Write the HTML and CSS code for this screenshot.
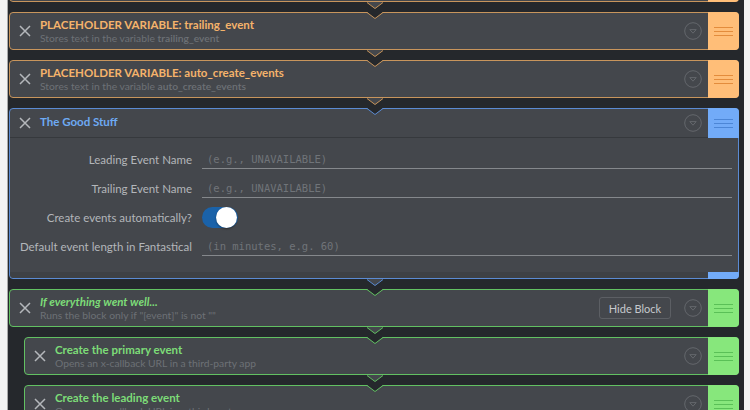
FILE: index.html
```html
<!DOCTYPE html>
<html>
<head>
<meta charset="utf-8">
<title>Blocks</title>
<link rel="stylesheet" href="styles.css">
</head>
<body>
<div class="editor">

  <div class="block orange first">
    <div class="head">
      <span class="close"><svg viewBox="0 0 12 12" width="12" height="12"><path d="M1 1L11 11M11 1L1 11"/></svg></span>
      <div class="text"></div>
      <span class="dd"><svg viewBox="0 0 18 18" width="18" height="18"><circle cx="9" cy="9" r="8.3"/><path d="M5.8 7.6H12.2L9 11.2Z"/></svg></span>
      <span class="handle"><i></i><i></i><i></i></span>
    </div>
    <svg class="tab" viewBox="0 0 16 8" width="16" height="8"><polygon points="0,0 16,0 8,6.5" class="tfill"/><polyline points="0,0.5 8,6.5 16,0.5" class="nline"/></svg>
  </div>

  <div class="block orange">
    <svg class="notch" viewBox="0 0 16 8" width="16" height="8"><polygon points="0,0 16,0 8,6.5" class="nfill"/><polyline points="0,0.5 8,6.5 16,0.5" class="nline"/></svg>
    <div class="head">
      <span class="close"><svg viewBox="0 0 12 12" width="12" height="12"><path d="M1 1L11 11M11 1L1 11"/></svg></span>
      <div class="text"><div class="title">PLACEHOLDER VARIABLE: trailing_event</div><div class="sub">Stores text in the variable <b>trailing_event</b></div></div>
      <span class="dd"><svg viewBox="0 0 18 18" width="18" height="18"><circle cx="9" cy="9" r="8.3"/><path d="M5.8 7.6H12.2L9 11.2Z"/></svg></span>
      <span class="handle"><i></i><i></i><i></i></span>
    </div>
    <svg class="tab" viewBox="0 0 16 8" width="16" height="8"><polygon points="0,0 16,0 8,6.5" class="tfill"/><polyline points="0,0.5 8,6.5 16,0.5" class="nline"/></svg>
  </div>

  <div class="block orange">
    <svg class="notch" viewBox="0 0 16 8" width="16" height="8"><polygon points="0,0 16,0 8,6.5" class="nfill"/><polyline points="0,0.5 8,6.5 16,0.5" class="nline"/></svg>
    <div class="head">
      <span class="close"><svg viewBox="0 0 12 12" width="12" height="12"><path d="M1 1L11 11M11 1L1 11"/></svg></span>
      <div class="text"><div class="title">PLACEHOLDER VARIABLE: auto_create_events</div><div class="sub">Stores text in the variable <b>auto_create_events</b></div></div>
      <span class="dd"><svg viewBox="0 0 18 18" width="18" height="18"><circle cx="9" cy="9" r="8.3"/><path d="M5.8 7.6H12.2L9 11.2Z"/></svg></span>
      <span class="handle"><i></i><i></i><i></i></span>
    </div>
    <svg class="tab" viewBox="0 0 16 8" width="16" height="8"><polygon points="0,0 16,0 8,6.5" class="tfill"/><polyline points="0,0.5 8,6.5 16,0.5" class="nline"/></svg>
  </div>

  <div class="block blue form">
    <svg class="notch" viewBox="0 0 16 8" width="16" height="8"><polygon points="0,0 16,0 8,6.5" class="nfill"/><polyline points="0,0.5 8,6.5 16,0.5" class="nline"/></svg>
    <div class="head short">
      <span class="close"><svg viewBox="0 0 12 12" width="12" height="12"><path d="M1 1L11 11M11 1L1 11"/></svg></span>
      <div class="text"><div class="title">The Good Stuff</div></div>
      <span class="dd"><svg viewBox="0 0 18 18" width="18" height="18"><circle cx="9" cy="9" r="8.3"/><path d="M5.8 7.6H12.2L9 11.2Z"/></svg></span>
      <span class="handle"><i></i><i></i><i></i></span>
    </div>
    <div class="body">
      <div class="row"><label class="lbl">Leading Event Name</label><div class="field">(e.g., UNAVAILABLE)</div></div>
      <div class="row"><label class="lbl">Trailing Event Name</label><div class="field">(e.g., UNAVAILABLE)</div></div>
      <div class="row"><label class="lbl">Create events automatically?</label><span class="switch"><span class="knob"></span></span></div>
      <div class="row"><label class="lbl">Default event length in Fantastical</label><div class="field">(in minutes, e.g. 60)</div></div>
    </div>
    <div class="foot"><span class="foot-handle"></span></div>
    <svg class="tab" viewBox="0 0 16 8" width="16" height="8"><polygon points="0,0 16,0 8,6.5" class="tfill"/><polyline points="0,0.5 8,6.5 16,0.5" class="nline"/></svg>
  </div>

  <div class="block green">
    <svg class="notch" viewBox="0 0 16 8" width="16" height="8"><polygon points="0,0 16,0 8,6.5" class="nfill"/><polyline points="0,0.5 8,6.5 16,0.5" class="nline"/></svg>
    <div class="head">
      <span class="close"><svg viewBox="0 0 12 12" width="12" height="12"><path d="M1 1L11 11M11 1L1 11"/></svg></span>
      <div class="text"><div class="title italic">If everything went well...</div><div class="sub">Runs the block only if "[event]" is not ""</div></div>
      <button class="hide">Hide Block</button>
      <span class="dd"><svg viewBox="0 0 18 18" width="18" height="18"><circle cx="9" cy="9" r="8.3"/><path d="M5.8 7.6H12.2L9 11.2Z"/></svg></span>
      <span class="handle"><i></i><i></i><i></i></span>
    </div>
    <svg class="tab" viewBox="0 0 16 8" width="16" height="8"><polygon points="0,0 16,0 8,6.5" class="tfill"/><polyline points="0,0.5 8,6.5 16,0.5" class="nline"/></svg>
  </div>

  <div class="block green nested">
    <svg class="notch" viewBox="0 0 16 8" width="16" height="8"><polygon points="0,0 16,0 8,6.5" class="nfill"/><polyline points="0,0.5 8,6.5 16,0.5" class="nline"/></svg>
    <div class="head">
      <span class="close"><svg viewBox="0 0 12 12" width="12" height="12"><path d="M1 1L11 11M11 1L1 11"/></svg></span>
      <div class="text"><div class="title">Create the primary event</div><div class="sub">Opens an x-callback URL in a third-party app</div></div>
      <span class="dd"><svg viewBox="0 0 18 18" width="18" height="18"><circle cx="9" cy="9" r="8.3"/><path d="M5.8 7.6H12.2L9 11.2Z"/></svg></span>
      <span class="handle"><i></i><i></i><i></i></span>
    </div>
    <svg class="tab" viewBox="0 0 16 8" width="16" height="8"><polygon points="0,0 16,0 8,6.5" class="tfill"/><polyline points="0,0.5 8,6.5 16,0.5" class="nline"/></svg>
  </div>

  <div class="block green nested">
    <svg class="notch" viewBox="0 0 16 8" width="16" height="8"><polygon points="0,0 16,0 8,6.5" class="nfill"/><polyline points="0,0.5 8,6.5 16,0.5" class="nline"/></svg>
    <div class="head">
      <span class="close"><svg viewBox="0 0 12 12" width="12" height="12"><path d="M1 1L11 11M11 1L1 11"/></svg></span>
      <div class="text"><div class="title">Create the leading event</div><div class="sub">Opens an x-callback URL in a third-party app</div></div>
      <span class="dd"><svg viewBox="0 0 18 18" width="18" height="18"><circle cx="9" cy="9" r="8.3"/><path d="M5.8 7.6H12.2L9 11.2Z"/></svg></span>
      <span class="handle"><i></i><i></i><i></i></span>
    </div>
    <svg class="tab" viewBox="0 0 16 8" width="16" height="8"><polygon points="0,0 16,0 8,6.5" class="tfill"/><polyline points="0,0.5 8,6.5 16,0.5" class="nline"/></svg>
  </div>

</div>
</body>
</html>
```

FILE: styles.css
```css
html, body {
  margin: 0;
  padding: 0;
  height: 410px;
  overflow: hidden;
  background: #f3f3f3;
  font-family: Lato, "Noto Sans", sans-serif;
}

.editor {
  margin-left: 7px;
  width: 737px;
  height: 450px;
  margin-top: -36px;
  box-sizing: border-box;
  border-left: 1px solid #a9a9a9;
  background: #25282c;
  padding: 0 5px 0 1px;
  display: flex;
  flex-direction: column;
  gap: 10px;
}

.block {
  --bc: #c8955c;
  --tc: #f5b36b;
  --hc: #ffbe78;
  --lc: #e38c3c;
  --bg: #44474c;
  position: relative;
  background: var(--bg);
  border: 1px solid var(--bc);
  border-radius: 4px;
  --nx: 357px;
}
.block.blue {
  --bc: #5b8bd3;
  --tc: #6eaaf3;
  --hc: #72abf8;
  --lc: #4c86d6;
}
.block.green {
  --bc: #62c162;
  --tc: #7ddc78;
  --hc: #87e77c;
  --lc: #5ac057;
}
.block.nested {
  margin-left: 15px;
  --nx: 342px;
}

.notch, .tab {
  position: absolute;
  left: var(--nx);
  display: block;
}
.notch { top: -1px; }
.tab { bottom: -9px; }
.nfill { fill: #25282c; }
.tfill { fill: var(--bg); }
.nline { fill: none; stroke: var(--bc); stroke-width: 1; }

.head {
  height: 36px;
  display: flex;
  align-items: center;
}
.head.short {
  height: 28px;
  border-bottom: 1px solid #36393d;
}

.close {
  width: 30px;
  display: flex;
  justify-content: center;
  flex: none;
}
.close svg path {
  stroke: #b4b7bb;
  stroke-width: 1.5;
  fill: none;
}

.text {
  flex: 1;
  min-width: 0;
  display: flex;
  flex-direction: column;
}
.title {
  color: var(--tc);
  font-weight: bold;
  font-size: 11.5px;
  line-height: 14px;
}
.head.short .title { margin-top: -2px; }
.title.italic { font-style: italic; }
.sub {
  color: #6d7176;
  font-size: 10.3px;
  line-height: 13px;
}
.sub b { font-weight: 600; }

.dd {
  width: 18px;
  height: 18px;
  margin-right: 6px;
  flex: none;
}
.dd svg { display: block; }
.dd circle { fill: none; stroke: #64676c; stroke-width: 1; }
.dd path { fill: none; stroke: #64676c; stroke-width: 1; stroke-linejoin: round; }

.handle {
  align-self: stretch;
  width: 31px;
  margin: -1px -1px -1px 0;
  background: var(--hc);
  border-radius: 0 4px 4px 0;
  display: flex;
  flex-direction: column;
  align-items: center;
  justify-content: center;
  gap: 3px;
  flex: none;
}
.head.short .handle {
  border-radius: 0 4px 0 0;
  margin-bottom: -1px;
}
.handle i {
  display: block;
  width: 19px;
  height: 1px;
  background: var(--lc);
}

.hide {
  font-family: inherit;
  font-size: 11px;
  color: #c6c9cd;
  background: transparent;
  border: 1px solid #5c5f64;
  border-radius: 3px;
  width: 72px;
  height: 22px;
  padding: 0;
  margin-right: 13px;
}

.body {
  padding: 7px 6px 11px 0;
  display: flex;
  flex-direction: column;
}
.row {
  height: 29px;
  display: flex;
  align-items: center;
  gap: 10px;
}
.lbl {
  width: 182px;
  text-align: right;
  color: #b3b6ba;
  font-size: 11.5px;
  flex: none;
}
.field {
  flex: 1;
  height: 18px;
  box-sizing: border-box;
  border-bottom: 1px solid #85888c;
  padding-left: 5px;
  font-family: "DejaVu Sans Mono", monospace;
  font-size: 10.5px;
  line-height: 16px;
  color: #707479;
}
.switch {
  width: 36px;
  height: 21px;
  border-radius: 11px;
  background: #1a62a9;
  position: relative;
  flex: none;
}
.knob {
  position: absolute;
  right: 1px;
  top: 0;
  width: 21px;
  height: 21px;
  border-radius: 50%;
  background: #ffffff;
  box-shadow: 0 1px 2px rgba(0,0,0,0.4);
}

.foot {
  height: 6px;
  background: #3e4145;
  display: flex;
  justify-content: flex-end;
  border-radius: 0 0 4px 4px;
}
.foot-handle {
  width: 31px;
  margin: 0 -1px -1px 0;
  background: var(--hc);
  border-radius: 0 0 4px 0;
}
```
